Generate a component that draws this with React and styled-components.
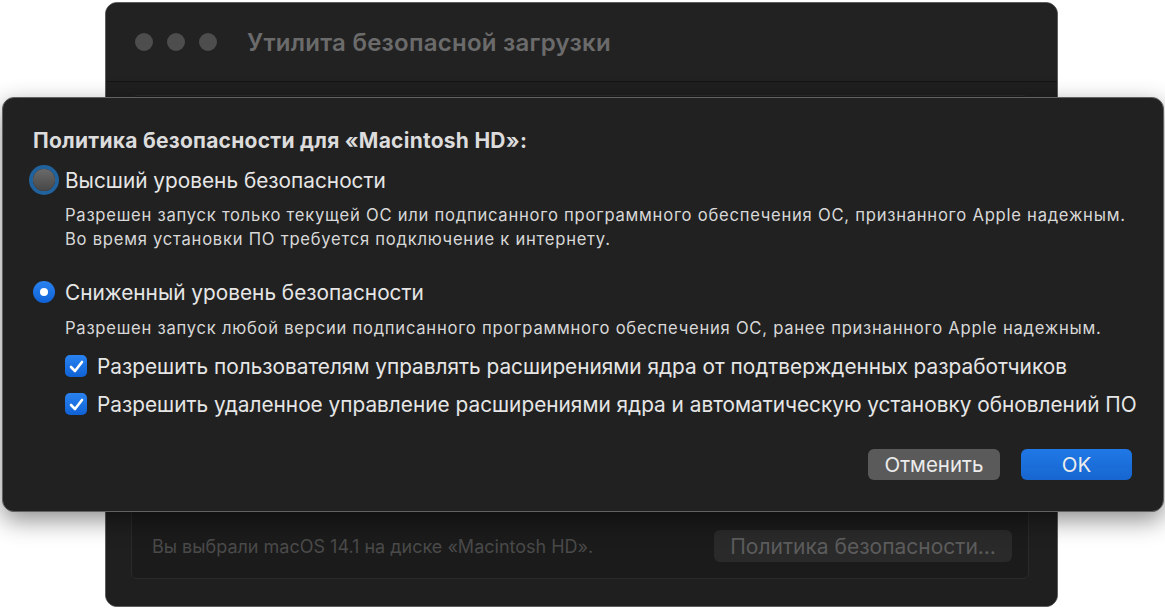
import React from 'react';
import styled, { createGlobalStyle } from 'styled-components';

const GlobalStyle = createGlobalStyle`
  html, body {
    margin: 0;
    padding: 0;
    background: #ffffff;
  }
  body {
    font-family: Inter, "Noto Sans", "DejaVu Sans", sans-serif;
    -webkit-font-smoothing: antialiased;
  }
`;

const Desktop = styled.div`
  position: relative;
  width: 1165px;
  height: 609px;
  overflow: hidden;
  background: #ffffff;
`;

// the utility window behind the sheet
const Window = styled.div`
  position: absolute;
  left: 105px;
  top: 2px;
  width: 953px;
  height: 605px;
  box-sizing: border-box;
  border: 1px solid #5e5e5e;
  border-radius: 12px;
  background: #1c1c1c;
  display: flex;
  flex-direction: column;
  overflow: hidden;
`;

const TitleBar = styled.div`
  height: 78px;
  flex-shrink: 0;
  display: flex;
  align-items: center;
  padding-left: 29px;
  background: #222222;
  border-bottom: 1px solid #151515;
`;

const Lights = styled.div`
  display: flex;
  gap: 14px;
`;

const Light = styled.span`
  width: 18px;
  height: 18px;
  border-radius: 50%;
  background: #4d4d4d;
`;

const WindowTitle = styled.div`
  margin-left: 30px;
  font-size: 24px;
  font-weight: 600;
  color: #6b6b6b;
  letter-spacing: 0.25px;
`;

const WindowBody = styled.div`
  flex: 1;
  display: flex;
  flex-direction: column;
  padding: 13px 28px 27px 25px;
  background: #1f1f1f;
`;

const GroupBox = styled.div`
  flex: 1;
  display: flex;
  align-items: flex-end;
  justify-content: space-between;
  padding: 0 16px 16px 20px;
  border: 1px solid #2a2a2a;
  border-radius: 6px;
  background: #1b1b1b;
`;

const InfoText = styled.div`
  font-size: 18px;
  color: #4a4a4a;
  padding-bottom: 5px;
`;

const GhostButton = styled.div`
  height: 32px;
  padding: 0 16px;
  display: flex;
  align-items: center;
  border-radius: 6px;
  background: #2a2a2a;
  color: #5c5c5c;
  font-size: 21px;
`;

// the sheet in front
const Sheet = styled.div`
  position: absolute;
  left: 2px;
  top: 97px;
  width: 1162px;
  height: 415px;
  box-sizing: border-box;
  border: 1px solid #626262;
  border-radius: 12px;
  background: #212121;
  box-shadow: 0 8px 24px rgba(0, 0, 0, 0.45);
  padding: 31px 31px 0 30px;
  display: flex;
  flex-direction: column;
  color: #e4e4e4;
`;

const Heading = styled.div`
  font-size: 21px;
  font-weight: 700;
  line-height: 24px;
  letter-spacing: 0.25px;
  color: #dcdcdc;
`;

const OptionRow = styled.div`
  display: flex;
  align-items: center;
  gap: 10px;
  height: 28px;
  margin-top: ${p => p.$top}px;
`;

const Radio = styled.span`
  position: relative;
  width: 22px;
  height: 22px;
  border-radius: 50%;
  flex-shrink: 0;
  box-sizing: border-box;
  background: ${p => p.$checked
    ? 'linear-gradient(#2a83f0, #0f62d6)'
    : 'linear-gradient(#6a6a6a, #474747)'};
  box-shadow: ${p => p.$focused ? '0 0 0 4px #22629c' : 'none'};

  &::after {
    content: '';
    display: ${p => p.$checked ? 'block' : 'none'};
    position: absolute;
    left: 7px;
    top: 7px;
    width: 8px;
    height: 8px;
    border-radius: 50%;
    background: #ffffff;
  }
`;

const OptionLabel = styled.span`
  font-size: 20.8px;
  color: #e6e6e6;
  white-space: nowrap;
`;

const Description = styled.div`
  margin: ${p => p.$top}px 0 0 32px;
  font-size: 16.6px;
  line-height: 24px;
  letter-spacing: 0.75px;
  color: #d8d8d8;
  white-space: nowrap;
`;

const CheckRow = styled.label`
  display: flex;
  align-items: center;
  gap: 10px;
  height: 26px;
  margin: ${p => p.$top}px 0 0 32px;
`;

const CheckBox = styled.span`
  width: 22px;
  height: 22px;
  border-radius: 5px;
  flex-shrink: 0;
  display: flex;
  align-items: center;
  justify-content: center;
  background: linear-gradient(#2a83f0, #0f62d6);
`;

const Footer = styled.div`
  margin-top: 32px;
  display: flex;
  justify-content: flex-end;
  gap: 21px;
`;

const Button = styled.div`
  width: ${p => p.$width}px;
  height: 31px;
  border-radius: 6px;
  display: flex;
  align-items: center;
  justify-content: center;
  font-size: 20.5px;
  color: #ececec;
  background: ${p => p.$primary
    ? 'linear-gradient(#1f78e6, #1766d0)'
    : '#5a5a5a'};
`;

function Check() {
  return (
    <svg width="15" height="13" viewBox="0 0 15 13">
      <path d="M2 7 L6 11 L13 2" fill="none" stroke="#fff" strokeWidth="2.6"
        strokeLinecap="round" strokeLinejoin="round" />
    </svg>
  );
}

export default function App() {
  return (
    <>
      <GlobalStyle />
      <Desktop>
        <Window>
          <TitleBar>
            <Lights>
              <Light />
              <Light />
              <Light />
            </Lights>
            <WindowTitle>Утилита безопасной загрузки</WindowTitle>
          </TitleBar>
          <WindowBody>
            <GroupBox>
              <InfoText>Вы выбрали macOS 14.1 на диске «Macintosh HD».</InfoText>
              <GhostButton>Политика безопасности…</GhostButton>
            </GroupBox>
          </WindowBody>
        </Window>

        <Sheet>
          <Heading>Политика безопасности для «Macintosh HD»:</Heading>

          <OptionRow $top={13}>
            <Radio $focused />
            <OptionLabel>Высший уровень безопасности</OptionLabel>
          </OptionRow>
          <Description $top={9}>
            Разрешен запуск только текущей ОС или подписанного программного обеспечения ОС, признанного Apple надежным.
            <br />
            Во время установки ПО требуется подключение к интернету.
          </Description>

          <OptionRow $top={27}>
            <Radio $checked />
            <OptionLabel>Сниженный уровень безопасности</OptionLabel>
          </OptionRow>
          <Description $top={10}>
            Разрешен запуск любой версии подписанного программного обеспечения ОС, ранее признанного Apple надежным.
          </Description>

          <CheckRow $top={13}>
            <CheckBox><Check /></CheckBox>
            <OptionLabel>Разрешить пользователям управлять расширениями ядра от подтвержденных разработчиков</OptionLabel>
          </CheckRow>
          <CheckRow $top={12}>
            <CheckBox><Check /></CheckBox>
            <OptionLabel>Разрешить удаленное управление расширениями ядра и автоматическую установку обновлений ПО</OptionLabel>
          </CheckRow>

          <Footer>
            <Button $width={132}>Отменить</Button>
            <Button $width={111} $primary>OK</Button>
          </Footer>
        </Sheet>
      </Desktop>
    </>
  );
}
